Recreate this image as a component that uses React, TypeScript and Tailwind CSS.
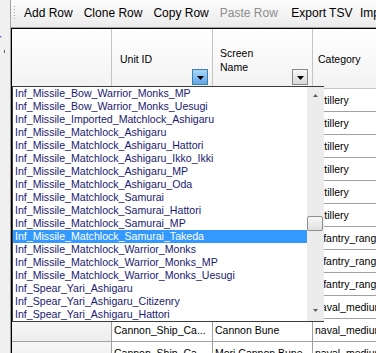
const tools = [
  { label: "Add Row", disabled: false },
  { label: "Clone Row", disabled: false },
  { label: "Copy Row", disabled: false },
  { label: "Paste Row", disabled: true },
];

const options = [
  "Inf_Missile_Bow_Warrior_Monks_MP",
  "Inf_Missile_Bow_Warrior_Monks_Uesugi",
  "Inf_Missile_Imported_Matchlock_Ashigaru",
  "Inf_Missile_Matchlock_Ashigaru",
  "Inf_Missile_Matchlock_Ashigaru_Hattori",
  "Inf_Missile_Matchlock_Ashigaru_Ikko_Ikki",
  "Inf_Missile_Matchlock_Ashigaru_MP",
  "Inf_Missile_Matchlock_Ashigaru_Oda",
  "Inf_Missile_Matchlock_Samurai",
  "Inf_Missile_Matchlock_Samurai_Hattori",
  "Inf_Missile_Matchlock_Samurai_MP",
  "Inf_Missile_Matchlock_Samurai_Takeda",
  "Inf_Missile_Matchlock_Warrior_Monks",
  "Inf_Missile_Matchlock_Warrior_Monks_MP",
  "Inf_Missile_Matchlock_Warrior_Monks_Uesugi",
  "Inf_Spear_Yari_Ashigaru",
  "Inf_Spear_Yari_Ashigaru_Citizenry",
  "Inf_Spear_Yari_Ashigaru_Hattori",
];

// rows under the open list only show their category edge
const rows = [
  { id: "", name: "", category: "artillery" },
  { id: "", name: "", category: "artillery" },
  { id: "", name: "", category: "artillery" },
  { id: "", name: "", category: "artillery" },
  { id: "", name: "", category: "artillery" },
  { id: "", name: "", category: "artillery" },
  { id: "", name: "", category: "infantry_ranged" },
  { id: "", name: "", category: "infantry_ranged" },
  { id: "", name: "", category: "infantry_ranged" },
  { id: "", name: "", category: "naval_medium" },
  { id: "Cannon_Ship_Ca...", name: "Cannon Bune", category: "naval_medium" },
  { id: "Cannon_Ship_Ca...", name: "Mori Cannon Bune", category: "naval_medium" },
];

const selected = 11;

function DownTriangle() {
  return (
    <svg width="7" height="4" viewBox="0 0 7 4">
      <path d="M0 0h7L3.5 4z" fill="#000" />
    </svg>
  );
}

function HeaderButton({ active }: { active?: boolean }) {
  return (
    <div
      className={
        active
          ? "absolute bottom-[3px] right-[4px] flex h-[16px] w-[16px] items-center justify-center border border-[#3c7fb1] bg-gradient-to-b from-[#a9d6f7] to-[#5fa8e6] pt-[2px]"
          : "absolute bottom-[3px] right-[4px] flex h-[16px] w-[16px] items-center justify-center border border-[#8a8a8a] bg-gradient-to-b from-[#f7f7f7] to-[#d9d9d9] pt-[2px]"
      }
    >
      <DownTriangle />
    </div>
  );
}

function Toolbar() {
  return (
    <div className="flex h-[28px] shrink-0 items-center whitespace-nowrap border-b border-[#a0a0a0] bg-gradient-to-b from-[#fcfcfc] to-[#ebebeb] pb-[2px] pl-[3px] text-[12px]">
      <div className="mr-[3.5px] flex w-[2px] flex-col gap-[2px]">
        {[0, 1, 2, 3, 4].map((i) => (
          <span key={i} className="h-[1px] w-[1px] bg-[#a0a0a0]" />
        ))}
      </div>
      {tools.map((t) => (
        <span key={t.label} className={t.disabled ? "px-[5.5px] text-[#8d8d8d]" : "px-[5.5px] text-black"}>
          {t.label}
        </span>
      ))}
      <span className="ml-[1px] mr-[1.5px] h-[16px] w-[1px] bg-[#b5b5b5]" />
      <span className="px-[5.5px]">Export TSV</span>
      <span className="px-[2px]">Import TSV</span>
    </div>
  );
}

function Dropdown() {
  return (
    <div className="absolute left-0 top-[57px] flex h-[236px] w-[312px] border-y border-l border-[#3c3c3c] bg-white">
      <div className="flex-1">
        {options.map((o, i) => (
          <div
            key={o}
            className={
              i === selected
                ? "h-[13px] whitespace-nowrap bg-[#3399ff] pl-[2px] text-[10.6px] leading-[13px] text-white"
                : "h-[13px] whitespace-nowrap pl-[2px] text-[10.6px] leading-[13px] text-[#1a1a70]"
            }
          >
            {o}
          </div>
        ))}
      </div>
      <div className="relative w-[17px] bg-[#ececec]">
        <div className="flex h-[17px] items-center justify-center">
          <svg width="5" height="3" viewBox="0 0 5 3">
            <path d="M2.5 0L5 3H0z" fill="#606060" />
          </svg>
        </div>
        <div className="absolute left-0 top-[129px] h-[15px] w-[16px] rounded-[2px] border border-[#8e8e8e] bg-gradient-to-b from-[#f8f8f8] to-[#e0e0e0]" />
        <div className="absolute bottom-[2px] left-0 flex h-[17px] w-[16px] items-center justify-center">
          <svg width="5" height="3" viewBox="0 0 5 3">
            <path d="M0 0h5L2.5 3z" fill="#606060" />
          </svg>
        </div>
      </div>
    </div>
  );
}

function Grid() {
  return (
    <div className="relative min-h-0 flex-1 overflow-hidden border-l border-t border-black text-[10.5px]">
      <div className="grid grid-cols-[100px_101px_100px_1fr]">
        <div className="h-[60px] border-b border-r border-[#c4c4c4] bg-gradient-to-b from-white to-[#f2f2f2]" />
        <div className="relative flex h-[60px] items-center border-b border-r border-[#c4c4c4] bg-gradient-to-b from-white to-[#f2f2f2] pl-[8px] pt-[2px]">
          Unit ID
          <HeaderButton active />
        </div>
        <div className="relative flex h-[60px] items-center border-b border-r border-[#c4c4c4] bg-gradient-to-b from-white to-[#f2f2f2] pl-[7px] pt-[2px] leading-[14px]">
          Screen
          <br />
          Name
          <HeaderButton />
        </div>
        <div className="flex h-[60px] items-center border-b border-[#c4c4c4] bg-gradient-to-b from-white to-[#f2f2f2] pl-[5px] pt-[2px]">
          Category
        </div>

        {rows.map((r, i) => (
          <div key={i} className="contents">
            <div className="h-[23px] border-b border-r border-[#a0a0a0] bg-gradient-to-b from-[#f7f7f7] to-[#ededed]" />
            <div className="flex h-[23px] items-center whitespace-nowrap border-b border-r border-[#a0a0a0] pl-[2px] pt-[1px]">
              {r.id}
            </div>
            <div className="flex h-[23px] items-center overflow-hidden whitespace-nowrap border-b border-r border-[#a0a0a0] pl-[2px] pt-[1px]">
              {r.name}
            </div>
            <div className="flex h-[23px] items-center whitespace-nowrap border-b border-[#a0a0a0] pl-[2px] pt-[1px]">
              {r.category}
            </div>
          </div>
        ))}
      </div>
      <Dropdown />
    </div>
  );
}

export default function App() {
  return (
    <div className="flex h-[353px] w-[376px] overflow-hidden bg-white font-['Liberation_Sans',Arial,sans-serif] text-black">
      <div className="relative w-[11px] shrink-0 overflow-hidden border-r border-[#a0a0a0] bg-[#f0f0f0]">
        <span className="absolute left-[-3px] top-[33px] text-[11px] font-bold leading-none text-[#7a2b9a]">r</span>
        <span className="absolute left-[4px] top-[50px] h-[3px] w-[1px] bg-[#606060]" />
      </div>
      <div className="flex min-w-0 flex-1 flex-col">
        <Toolbar />
        <Grid />
      </div>
    </div>
  );
}
